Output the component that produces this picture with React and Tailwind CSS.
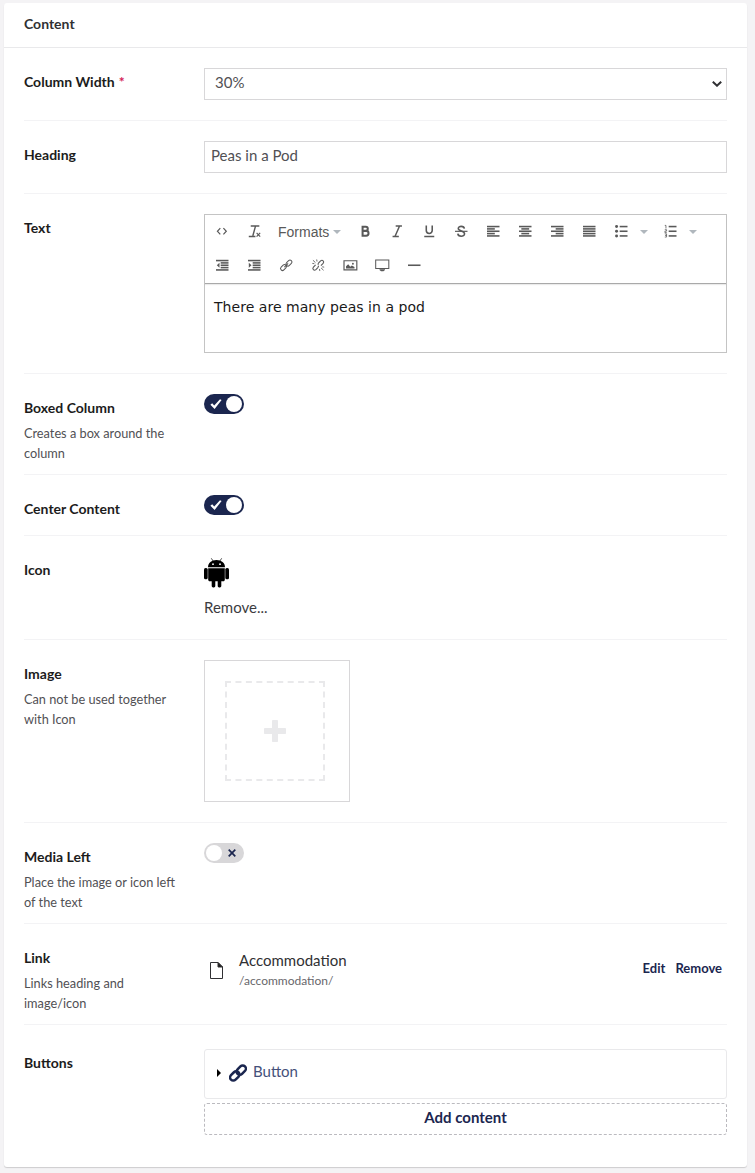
import React from "react";

const lines = (rows) =>
  rows.map(([x, w], i) => <rect key={i} x={x} y={1 + i * 3} width={w} height="2" />);

const stroke = { fill: "none", stroke: "currentColor" };

const glyphs = {
  code: (
    <path {...stroke} strokeWidth="1.5" d="M5.500 4 1.800 8l3.700 4M9.500 4 13.200 8l-3.700 4" />
  ),
  clear: (
    <g {...stroke} strokeWidth="1.8">
      <path d="M3.5 1.2H14.500M9.600 1.500 6.200 13.800M1 14.800h8.500" />
      <path strokeWidth="1.500" d="m11 10.200 4.600 4.800m0-4.800L11 15" />
    </g>
  ),
  bold: (
    <path
      {...stroke}
      strokeWidth="2.600"
      d="M4.600 2.300h4.100c3.400 0 3.400 5.200 0 5.200H4.600h4.600c4 0 4 6.200 0 6.200H4.600zM4.600 1v14"
    />
  ),
  italic: <path {...stroke} strokeWidth="1.9" d="M6 1.400h8M2 14.600h8M10.800 1.500 5.200 14.500" />,
  underline: (
    <path {...stroke} strokeWidth="2" d="M4.200 0.500v6.600c0 5 7.600 5 7.600 0V0.500M1.600 14.600h12.800" />
  ),
  strike: (
    <g {...stroke} strokeWidth="2">
      <path d="M12 4.600C11.600 .8 4.200.9 4.200 4.400c0 3.600 8 2.900 8 6.800 0 4.100-8.300 4.200-8.600-.2" />
      <path strokeWidth="1.500" d="M0 8.100h16" />
    </g>
  ),
  left: lines([[0, 16], [0, 10], [0, 16], [0, 10], [0, 16]]),
  center: lines([[0, 16], [3, 10], [0, 16], [3, 10], [0, 16]]),
  right: lines([[0, 16], [6, 10], [0, 16], [6, 10], [0, 16]]),
  justify: lines([[0, 16], [0, 16], [0, 16], [0, 16], [0, 16]]),
  bullets: (
    <>
      <rect x="6" y="1" width="10" height="2" />
      <rect x="6" y="7" width="10" height="2" />
      <rect x="6" y="13" width="10" height="2" />
      <circle cx="2" cy="2" r="1.900" />
      <circle cx="2" cy="8" r="1.900" />
      <circle cx="2" cy="14" r="1.900" />
    </>
  ),
  numbers: (
    <>
      <rect x="6" y="1" width="10" height="2" />
      <rect x="6" y="7" width="10" height="2" />
      <rect x="6" y="13" width="10" height="2" />
      <path {...stroke} strokeWidth="1" d="M1 .5h1.500V4.500M1 6h2.300v1.800H1.200v2h2.400M1 11.400h2.300v4H1M1.400 13.400h2" />
    </>
  ),
  outdent: (
    <>
      <rect x="0" y="1" width="16" height="2" />
      <rect x="6" y="4" width="10" height="2" />
      <rect x="6" y="7" width="10" height="2" />
      <rect x="6" y="10" width="10" height="2" />
      <rect x="0" y="13" width="16" height="2" />
      <path d="M4.500 4.800v6.400L1 8z" />
    </>
  ),
  indent: (
    <>
      <rect x="0" y="1" width="16" height="2" />
      <rect x="6" y="4" width="10" height="2" />
      <rect x="6" y="7" width="10" height="2" />
      <rect x="6" y="10" width="10" height="2" />
      <rect x="0" y="13" width="16" height="2" />
      <path d="M1 4.800v6.400L4.500 8z" />
    </>
  ),
  link: (
    <g {...stroke} strokeWidth="1.300">
      <rect x="7.200" y="2.700" width="8.600" height="5" rx="2.500" transform="rotate(-45 11.500 5.200)" />
      <rect x="0.200" y="8.500" width="8.600" height="5" rx="2.500" transform="rotate(-45 4.500 11)" />
      <path d="m5.600 10.400 4.800-4.800" />
    </g>
  ),
  unlink: (
    <g {...stroke} strokeWidth="1.400">
      <path d="M8.200 5.400 11 2.400c2.400-2 5.200.8 3.200 3.200l-2.800 2.900M7.800 10.600 5 13.600c-2.400 2-5.200-.8-3.200-3.200l2.800-2.900M8.200 5.400l-.6 2M7.800 10.600l.6-2" />
      <path strokeWidth="1.100" d="m1.200 1.600 3.200 3M6 .6l.4 2.600M.4 5.600 3 6M14.800 14.400l-3.200-3M10 15.400l-.4-2.600M15.600 10.400 13 10" />
    </g>
  ),
  image: (
    <>
      <path {...stroke} strokeWidth="1.500" d="M0 2.200h16.400v11.800H0z" />
      <path d="M2.600 12V9.400L5.400 6.800l2.600 3 2-1.600 3.400 2V12z" />
      <circle cx="11.400" cy="6" r="1.200" />
    </>
  ),
  monitor: (
    <>
      <path {...stroke} strokeWidth="1.300" d="M-.4 1.200h16.800v11H-.4z" />
      <path d="M4.500 13h7v1.100l-2 1.600h-3l-2-1.600z" />
    </>
  ),
  rule: <rect x="0" y="7" width="16" height="2" />,
};

function Tool({ name }) {
  return (
    <span className="flex h-[34px] w-8 shrink-0 items-center pb-px pl-[10px]">
      <svg className="h-[12.5px] w-[12.5px] overflow-visible" viewBox="0 0 16 16" fill="currentColor">
        {glyphs[name]}
      </svg>
    </span>
  );
}

function Caret() {
  return (
    <svg className="h-1 w-2 shrink-0" viewBox="0 0 8 4" fill="#b0b7bd">
      <path d="M0 0h8L4 4z" />
    </svg>
  );
}

function ListTool({ name }) {
  return (
    <span className="flex h-[34px] w-[49px] items-center">
      <Tool name={name} />
      <span className="pl-[3px]">
        <Caret />
      </span>
    </span>
  );
}

function Row({ label, required, hint, height, last, pad = "pt-5", children }) {
  return (
    <div className={`flex ${height} ${pad} ${last ? "" : "border-b border-[#f3f3f5]"}`}>
      <div className="w-[180px] shrink-0 pr-4">
        <div className="pt-1 text-[14px] leading-5 font-bold text-[#1c1c1c]">
          {label}
          {required && <span className="pl-1 text-[#d42054]">*</span>}
        </div>
        {hint && <div className="mt-[5px] text-[12.75px] leading-5 text-[#515054]">{hint}</div>}
      </div>
      <div className="min-w-0 flex-1">{children}</div>
    </div>
  );
}

function Toggle({ on }) {
  return on ? (
    <div className="flex h-5 w-10 items-center justify-between rounded-full bg-[#1b264f] pr-[2px] pl-[6px]">
      <svg className="h-3 w-3" viewBox="0 0 12 12" fill="#fff">
        <path d="M.4 6.800 2.200 5.200 4.200 7.400 10 1.200 11.600 2 4.600 11z" />
      </svg>
      <span className="h-4 w-4 rounded-full bg-white" />
    </div>
  ) : (
    <div className="flex h-5 w-10 items-center justify-between rounded-full bg-[#d8d7d9] pr-2 pl-[2px]">
      <span className="h-4 w-4 rounded-full bg-white" />
      <svg className="h-2 w-2" viewBox="0 0 8 8" fill="none" stroke="#1b264f" strokeWidth="1.7">
        <path d="M.7.7l6.6 6.6M7.3.7.7 7.3" />
      </svg>
    </div>
  );
}

function Android() {
  return (
    <svg className="h-[30px] w-[25px]" viewBox="0 0 25 30" fill="#000">
      <path d="M4 9.200C4 5 7.600 2 12.500 2S21 5 21 9.200z" />
      <path d="m7.300.3 2 3M17.700.3l-2 3" stroke="#000" strokeWidth=".7" />
      <circle cx="9" cy="6.200" r=".9" fill="#fff" />
      <circle cx="16" cy="6.200" r=".9" fill="#fff" />
      <path d="M4.200 10.200h16.600v11.600c0 .9-.6 1.500-1.500 1.500H5.700c-.9 0-1.500-.6-1.500-1.500z" />
      <rect x="0" y="10" width="3.700" height="11.300" rx="1.600" />
      <rect x="21.300" y="10" width="3.700" height="11.300" rx="1.600" />
      <rect x="7.700" y="21" width="3.600" height="8.500" rx="1.400" />
      <rect x="13.700" y="21" width="3.600" height="8.500" rx="1.400" />
    </svg>
  );
}

export default function App() {
  return (
    <div className="h-[1173px] bg-[#f4f3f5] px-1 pt-[3px] font-['Lato',sans-serif]">
      <main className="h-[1164px] w-[743px] rounded-[3px] bg-white shadow-[0_1px_1px_0_rgba(0,0,0,0.16)]">
        <header className="flex h-[45px] items-center border-b border-[#e9e9eb] px-5 pb-[3px] text-[14px] font-bold text-[#303033]">
          Content
        </header>
        <div className="px-5">
          <Row label="Column Width" required height="h-[73px]">
            <div className="flex h-8 items-center justify-between border border-[#d8d7d9] pr-[4px] pb-[3px] pl-[10px] text-[15px] text-[#515054]">
              30%
              <svg className="mt-[3px] h-[6px] w-[10px]" viewBox="0 0 10 6" fill="none" stroke="#303033" strokeWidth="2">
                <path d="M.8.7 5 4.700 9.200.7" />
              </svg>
            </div>
          </Row>
          <Row label="Heading" height="h-[73px]">
            <div className="flex h-8 items-center border border-[#d8d7d9] px-[6px] pb-1 text-[15px] text-[#515054]">
              Peas in a Pod
            </div>
          </Row>
          <Row label="Text" height="h-[180px]">
            <div className="h-[139px] border border-[#c4c4c4] text-[#595959]">
              <div className="h-[69px] border-b border-[#a9a9a9] shadow-[0_1px_1px_0_rgba(0,0,0,0.08)]">
                <div className="flex pl-px">
                  <Tool name="code" />
                  <Tool name="clear" />
                  <span className="flex h-[34px] w-[79px] items-center gap-1 pl-2 font-['Liberation_Sans',sans-serif] text-[14px]">
                    Formats
                    <Caret />
                  </span>
                  <Tool name="bold" />
                  <Tool name="italic" />
                  <Tool name="underline" />
                  <Tool name="strike" />
                  <Tool name="left" />
                  <Tool name="center" />
                  <Tool name="right" />
                  <Tool name="justify" />
                  <ListTool name="bullets" />
                  <ListTool name="numbers" />
                </div>
                <div className="flex pl-px">
                  <Tool name="outdent" />
                  <Tool name="indent" />
                  <Tool name="link" />
                  <Tool name="unlink" />
                  <Tool name="image" />
                  <Tool name="monitor" />
                  <Tool name="rule" />
                </div>
              </div>
              <div className="px-[9px] pt-[13px] font-['DejaVu_Sans',sans-serif] text-[14px] leading-5 tracking-[0.04px] text-[#1a1a1a]">
                There are many peas in a pod
              </div>
            </div>
          </Row>
          <Row label="Boxed Column" hint="Creates a box around the column" height="h-[101px]">
            <Toggle on />
          </Row>
          <Row label="Center Content" height="h-[61px]">
            <Toggle on />
          </Row>
          <Row label="Icon" height="h-[104px]">
            <div className="pt-[2px]">
              <Android />
              <div className="mt-[9px] text-[15px] leading-5 text-[#3c3c3f]">Remove...</div>
            </div>
          </Row>
          <Row label="Image" hint="Can not be used together with Icon" height="h-[183px]">
            <div className="h-[142px] w-[146px] border border-[#d8d7d9] p-5">
              <div className="flex h-[100px] w-[100px] items-center justify-center border-2 border-dashed border-[#e9e9eb]">
                <svg className="h-[22px] w-[22px]" viewBox="0 0 22 22" fill="#e9e9eb">
                  <rect x="0" y="8" width="22" height="6" rx=".8" />
                  <rect x="8" y="0" width="6" height="22" rx=".8" />
                </svg>
              </div>
            </div>
          </Row>
          <Row label="Media Left" hint="Place the image or icon left of the text" height="h-[101px]">
            <Toggle />
          </Row>
          <Row label="Link" hint="Links heading and image/icon" height="h-[101px]">
            <div className="flex items-center pt-[6px] pr-[5px] pl-[6px]">
              <svg className="mt-px h-[17px] w-[13px]" viewBox="0 0 13 17" fill="none" stroke="#303033">
                <path d="M.5.5H8l4.500 4.500v11.500H.5z" />
                <path d="M8 .5v4.500h4.500z" fill="#1c1c1c" />
              </svg>
              <div className="ml-4 flex-1">
                <div className="text-[15px] leading-5 text-[#303033]">Accommodation</div>
                <div className="pt-px text-[12px] leading-[19px] text-[#68676b]">/accommodation/</div>
              </div>
              <div className="flex gap-[10px] pb-[5px] text-[13px] leading-5 font-bold text-[#1b264f]">
                <span>Edit</span>
                <span>Remove</span>
              </div>
            </div>
          </Row>
          <Row label="Buttons" height="h-[142px]" pad="pt-6" last>
            <div className="flex h-[50px] items-center rounded-[3px] border border-[#e9e9eb] pb-[5px] pl-3 text-[15px] text-[#44507a]">
              <svg className="mt-[3px] h-2 w-1" viewBox="0 0 4 8" fill="#000">
                <path d="M0 0v8l4-4z" />
              </svg>
              <svg className="mt-[3px] mr-[6px] ml-2 h-[18px] w-[18px]" viewBox="0 0 18 18" fill="none" stroke="#1b264f" strokeWidth="2.500">
                <rect x="7" y="3" width="10.500" height="6.400" rx="3.200" transform="rotate(-45 12.200 6.200)" />
                <rect x=".5" y="8.800" width="10.500" height="6.400" rx="3.200" transform="rotate(-45 5.700 12)" />
              </svg>
              Button
            </div>
            <div className="mt-1 flex h-8 items-center justify-center rounded-[3px] border border-dashed border-[#bbbabf] pb-1 text-[15px] font-bold text-[#1b264f]">
              Add content
            </div>
          </Row>
        </div>
      </main>
    </div>
  );
}
